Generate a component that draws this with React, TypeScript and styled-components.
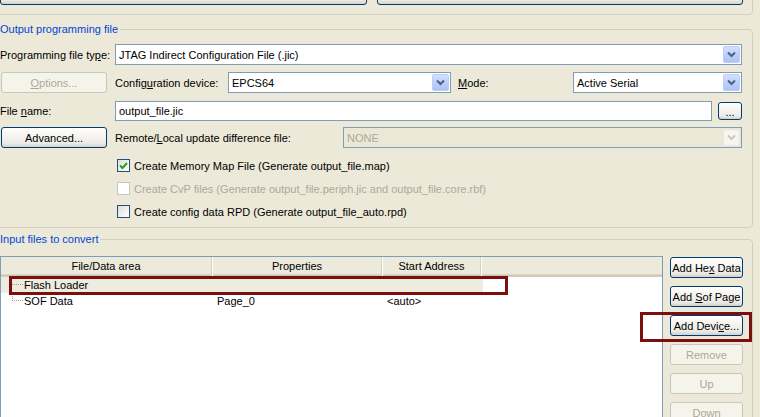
import React from 'react';
import styled, { createGlobalStyle, css } from 'styled-components';

const Global = createGlobalStyle`
  html, body { margin: 0; padding: 0; background: #ECE9D8; overflow: hidden; }
  body { font-family: "Liberation Sans", Arial, sans-serif; font-size: 11px; color: #000; }
  #root { width: 760px; height: 417px; overflow: hidden; }
  * { box-sizing: border-box; }
`;

const Page = styled.div`
  width: 768px;
  margin-left: -8px;
  margin-top: -20px;
`;

const TopGroup = styled.div`
  width: 761px;
  border: 1px solid #D0D0BF;
  border-radius: 4px;
  padding: 2px 9px 9px 7px;
  display: flex;
  gap: 10px;
`;

const xpButton = css`
  font-family: "Liberation Sans", Arial, sans-serif;
  font-size: 11px;
  color: #000;
  border: 1px solid #003C74;
  border-radius: 3px;
  background: linear-gradient(180deg, #FFFFFF 0%, #F7F6F2 35%, #ECEBE6 80%, #D6D0C5 100%);
  padding: 0;
  display: flex;
  align-items: center;
  justify-content: center;
  white-space: nowrap;
  &:disabled {
    border-color: #C9C7BA;
    background: #F5F4EA;
    color: #ACA899;
  }
`;

const WideButton = styled.button`
  ${xpButton};
  flex: 1;
  height: 22px;
`;

const Group = styled.fieldset<{ $pb: number; $w?: number }>`
  margin: 0;
  min-width: 0;
  width: 761px;
  border: 1px solid #D0D0BF;
  border-radius: 4px;
  padding: 8px 9px ${(p) => p.$pb}px 7px;
`;

const Legend = styled.legend`
  color: #0046D5;
  padding: 0 2px 0 0;
  line-height: 14px;
  font-size: 11px;
`;

const Row = styled.div<{ $mt?: number }>`
  display: flex;
  align-items: center;
  height: 21px;
  margin-top: ${(p) => p.$mt ?? 0}px;
`;

const Label = styled.span<{ $w: number }>`
  width: ${(p) => p.$w}px;
  flex: none;
  white-space: nowrap;
`;

const LeftCol = styled.div`
  width: 115px;
  flex: none;
  display: flex;
  padding-left: 1px;
`;

const SideButton = styled.button`
  ${xpButton};
  width: 106px;
  height: 21px;
`;

const Combo = styled.div<{ $w: number; $disabled?: boolean }>`
  width: ${(p) => p.$w}px;
  height: 21px;
  flex: none;
  display: flex;
  align-items: center;
  border: 1px solid #7F9DB9;
  background: ${(p) => (p.$disabled ? '#EBE8D7' : '#FFFFFF')};
  color: ${(p) => (p.$disabled ? '#ACA899' : '#000')};
  padding: 1px;
`;

const ComboText = styled.span`
  flex: 1;
  padding-left: 2px;
  white-space: nowrap;
  overflow: hidden;
`;

const Arrow = styled.span<{ $disabled?: boolean }>`
  width: 17px;
  height: 17px;
  flex: none;
  border-radius: 2px;
  display: flex;
  align-items: center;
  justify-content: center;
  ${(p) =>
    p.$disabled
      ? css`
          border: 1px solid #E8E6DA;
          background: #F6F5EE;
        `
      : css`
          border: 1px solid #BBCCF6;
          background: linear-gradient(180deg, #D3E0FD 0%, #BBCCF8 60%, #AFC3F2 100%);
        `}
`;

const Input = styled.div<{ $w: number }>`
  width: ${(p) => p.$w}px;
  height: 20px;
  flex: none;
  border: 1px solid #7F9DB9;
  background: #fff;
  display: flex;
  align-items: center;
  padding-left: 3px;
`;

const DotsButton = styled.button`
  ${xpButton};
  width: 24px;
  height: 18px;
  margin-left: 6px;
  align-items: flex-end;
  padding-bottom: 3px;
  line-height: 8px;
`;

const Checks = styled.div`
  margin-top: 6px;
  padding-left: 117px;
`;

const CheckRow = styled.div<{ $disabled?: boolean }>`
  height: 23px;
  display: flex;
  align-items: center;
  gap: 4px;
  color: ${(p) => (p.$disabled ? '#ACA899' : '#000')};
`;

const Box = styled.span<{ $disabled?: boolean }>`
  width: 13px;
  height: 13px;
  flex: none;
  display: flex;
  align-items: center;
  justify-content: center;
  ${(p) =>
    p.$disabled
      ? css`
          border: 1px solid #CAC8BB;
          background: #fff;
        `
      : css`
          border: 1px solid #1C5180;
          background: linear-gradient(135deg, #DCDCD7 0%, #F2F2EF 60%, #FFFFFF 100%);
        `}
`;

const Group2 = styled(Group)`
  margin-top: 4px;
  padding-top: 10px;
`;

const Body = styled.div`
  position: relative;
  display: flex;
  gap: 6px;
  height: 200px;
`;

const Table = styled.div`
  width: 663px;
  flex: none;
  border: 1px solid #7F9DB9;
  background: #fff;
`;

const Header = styled.div`
  display: flex;
  height: 20px;
  background: linear-gradient(180deg, #EBEADB 0%, #EBEADB 85%, #E2DECD 85%, #CBC7B8 92%, #D6D2C2 100%);
`;

const HeadCell = styled.div<{ $w?: number }>`
  ${(p) => (p.$w ? `width: ${p.$w}px; flex: none;` : 'flex: 1;')}
  display: flex;
  align-items: center;
  justify-content: center;
  padding-bottom: 2px;
  border-right: ${(p) => (p.$w ? '1px solid #D4D0C1' : 'none')};
  box-shadow: ${(p) => (p.$w ? '1px 0 0 #FFFFFF' : 'none')};
  margin: 0 1px 0 0;
`;

const TRow = styled.div<{ $selected?: boolean }>`
  display: flex;
  width: 482px;
  height: 16px;
  align-items: center;
  background: ${(p) => (p.$selected ? '#EEEBDF' : 'transparent')};
`;

const TCell = styled.div<{ $w: number }>`
  width: ${(p) => p.$w}px;
  flex: none;
  display: flex;
  align-items: center;
  height: 100%;
  padding-left: 4px;
  white-space: nowrap;
`;

const TreeCell = styled.div`
  width: 212px;
  flex: none;
  display: flex;
  height: 100%;
  align-items: center;
`;

const TreeLine = styled.span<{ $first?: boolean }>`
  align-self: flex-start;
  margin-left: 11px;
  width: 11px;
  height: 8px;
  border-bottom: 1px dotted #A39898;
  border-left: ${(p) => (p.$first ? 'none' : '1px dotted #A39898')};
  margin-right: 1px;
`;

const ButtonCol = styled.div`
  width: 73px;
  flex: none;
  display: flex;
  flex-direction: column;
  gap: 8px;
  padding-top: 1px;
  margin-left: 1px;
`;

const ColButton = styled.button`
  ${xpButton};
  width: 73px;
  height: 21px;
  flex: none;
`;

const Mark = styled.div<{ $x: number; $y: number; $w: number; $h: number }>`
  position: absolute;
  left: ${(p) => p.$x}px;
  top: ${(p) => p.$y}px;
  width: ${(p) => p.$w}px;
  height: ${(p) => p.$h}px;
  border: 3px solid #7B0F0F;
  pointer-events: none;
`;

const Chevron = ({ disabled }: { disabled?: boolean }) => (
  <svg width="9" height="7" viewBox="0 0 9 7">
    <path d="M1 1.5 L4.5 5 L8 1.5" fill="none" stroke={disabled ? '#C9C7BA' : '#4D6185'} strokeWidth="2" />
  </svg>
);

const Check = () => (
  <svg width="9" height="9" viewBox="0 0 9 9">
    <path d="M1 4.5 L3.5 7 L8 2" fill="none" stroke="#21A121" strokeWidth="2" />
  </svg>
);

const ComboBox = ({ w, text, disabled }: { w: number; text: string; disabled?: boolean }) => (
  <Combo $w={w} $disabled={disabled}>
    <ComboText>{text}</ComboText>
    <Arrow $disabled={disabled}>
      <Chevron disabled={disabled} />
    </Arrow>
  </Combo>
);

export default function App() {
  return (
    <>
      <Global />
      <Page>
        <TopGroup>
          <WideButton />
          <WideButton />
        </TopGroup>
        <div style={{ height: 7 }} />
        <Group $pb={4}>
          <Legend>Output programming file</Legend>
          <Row>
            <Label $w={115}>
              Programming file ty<u>p</u>e:
            </Label>
            <ComboBox w={627} text="JTAG Indirect Configuration File (.jic)" />
          </Row>
          <Row $mt={7}>
            <LeftCol>
              <SideButton disabled>
                <span>
                  <u>O</u>ptions...
                </span>
              </SideButton>
            </LeftCol>
            <Label $w={113}>
              Config<u>u</u>ration device:
            </Label>
            <ComboBox w={223} text="EPCS64" />
            <Label $w={122} style={{ paddingLeft: 7 }}>
              <u>M</u>ode:
            </Label>
            <ComboBox w={169} text="Active Serial" />
          </Row>
          <Row $mt={7}>
            <Label $w={115}>
              File <u>n</u>ame:
            </Label>
            <Input $w={597}>output_file.jic</Input>
            <DotsButton>...</DotsButton>
          </Row>
          <Row $mt={6}>
            <LeftCol>
              <SideButton>Advanced...</SideButton>
            </LeftCol>
            <Label $w={228}>
              Remote/<u>L</u>ocal update difference file:
            </Label>
            <ComboBox w={399} text="NONE" disabled />
          </Row>
          <Checks>
            <CheckRow>
              <Box>
                <Check />
              </Box>
              Create Memory Map File (Generate output_file.map)
            </CheckRow>
            <CheckRow $disabled>
              <Box $disabled />
              Create CvP files (Generate output_file.periph.jic and output_file.core.rbf)
            </CheckRow>
            <CheckRow>
              <Box />
              Create config data RPD (Generate output_file_auto.rpd)
            </CheckRow>
          </Checks>
        </Group>
        <Group2 $pb={0}>
          <Legend>Input files to convert</Legend>
          <Body>
            <Table>
              <Header>
                <HeadCell $w={211}>File/Data area</HeadCell>
                <HeadCell $w={169}>Properties</HeadCell>
                <HeadCell $w={98}>Start Address</HeadCell>
                <HeadCell />
              </Header>
              <TRow $selected>
                <TreeCell>
                  <TreeLine $first />
                  Flash Loader
                </TreeCell>
              </TRow>
              <TRow>
                <TreeCell>
                  <TreeLine />
                  SOF Data
                </TreeCell>
                <TCell $w={170}>Page_0</TCell>
                <TCell $w={100}>&lt;auto&gt;</TCell>
              </TRow>
            </Table>
            <ButtonCol>
              <ColButton>
                <span>
                  Add He<u>x</u> Data
                </span>
              </ColButton>
              <ColButton>
                <span>
                  Add <u>S</u>of Page
                </span>
              </ColButton>
              <ColButton>
                <span>
                  Add Devi<u>c</u>e...
                </span>
              </ColButton>
              <ColButton disabled>Remove</ColButton>
              <ColButton disabled>Up</ColButton>
              <ColButton disabled>Down</ColButton>
            </ButtonCol>
            <Mark $x={9} $y={20} $w={499} $h={19} />
            <Mark $x={640} $y={56} $w={112} $h={30} />
          </Body>
        </Group2>
      </Page>
    </>
  );
}
